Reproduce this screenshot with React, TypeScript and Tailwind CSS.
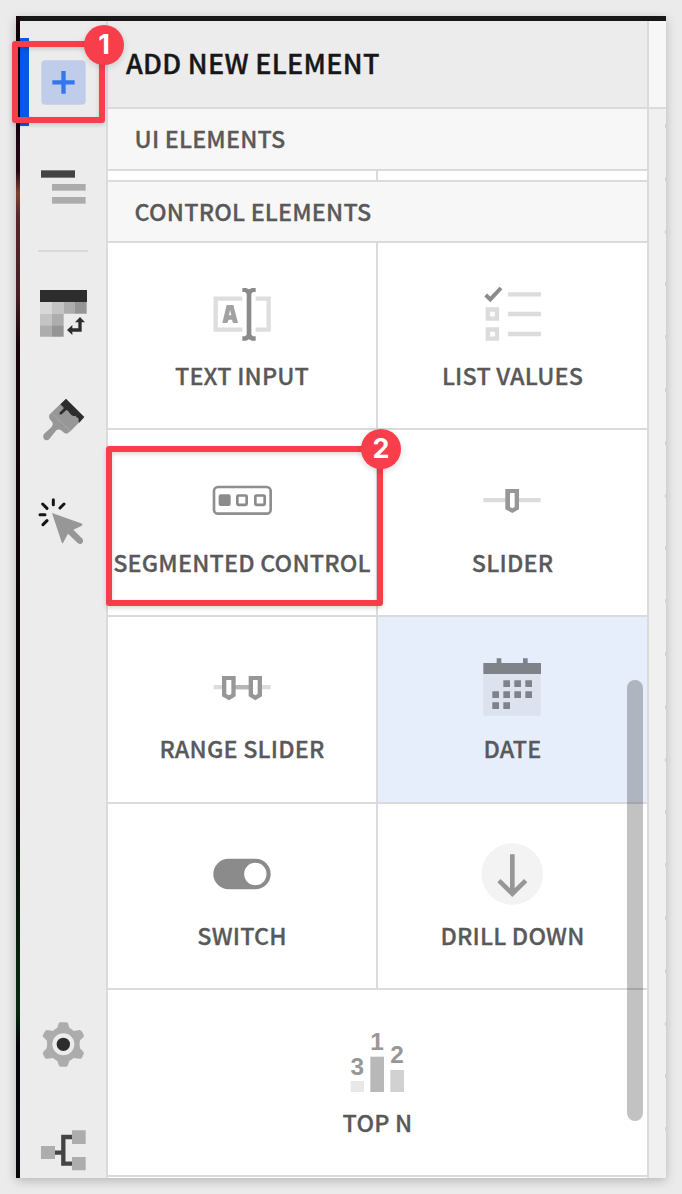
import type { ReactNode } from "react";

const FONT = "font-['Noto_Sans_CJK_SC','Noto_Sans',sans-serif]";

function NavIcon({ viewBox, className, label, children }: { viewBox: string; className: string; label: string; children: ReactNode }) {
  return (
    <button aria-label={label} className={`block w-[86px] shrink-0 ${className}`}>
      <svg viewBox={viewBox} className="block h-full w-full">{children}</svg>
    </button>
  );
}

function Tile({ label, viewBox, wide = false, className = "bg-white", labelGap = "mt-[11px]", children }: { label: string; viewBox: string; wide?: boolean; className?: string; labelGap?: string; children: ReactNode }) {
  return (
    <button className={`flex min-w-0 flex-col items-center overflow-hidden pt-[38px] ${className}`}>
      <svg viewBox={viewBox} className={wide ? "block h-[68px] w-[65px] shrink-0" : "block h-[68px] w-[64px] shrink-0"}>{children}</svg>
      <span className={`whitespace-nowrap text-[23.4px] font-medium leading-[30px] tracking-[0.18px] text-[#595959] [-webkit-text-stroke:0.3px_#595959] ${labelGap}`}>{label}</span>
    </button>
  );
}

function Sidebar() {
  return (
    <nav className="flex w-[86px] shrink-0 flex-col bg-[#ececec]">
      <button aria-label="Add" className="mt-[17px] block h-[88px] shrink-0 border-l-[9px] border-[#0558e8] pl-[12px]">
        <svg viewBox="123 180 135 135" className="block h-[45px] w-[45px]">
          <rect x="124" y="181" width="133" height="133" rx="12" fill="#bfcdea" />
          <path d="M157 247H224M190.500 213V281" stroke="#3477ea" strokeWidth="13" />
        </svg>
      </button>
      <NavIcon label="Outline" viewBox="60 105 258 135" className="mt-[39px] h-[45px]">
        <rect x="123" y="121" width="102" height="22" fill="#434343" />
        <rect x="156" y="162" width="101" height="20" fill="#acacac" />
        <rect x="156" y="201" width="101" height="20" fill="#acacac" />
      </NavIcon>
      <div className="ml-[18px] mt-[40px] h-[2px] w-[50px] shrink-0 bg-[#dadada]" />
      <NavIcon label="Data" viewBox="60 465 258 171" className="mt-[33px] h-[57px]">
        <rect x="120" y="480" width="141" height="36" fill="#2d2d2d" />
        <path d="M120 516h35v35h-35z" fill="#d8d8d8" />
        <path d="M155 516h36v35h-36zM120 551h35v35h-35z" fill="#c4c4c4" />
        <path d="M191 516h34v35h-34zM155 551h36v35h-36zM120 586h35v34h-35z" fill="#adadad" />
        <path d="M225 516h35v35h-35zM155 586h36v34h-36z" fill="#959595" />
        <path d="M240 570V600H212" fill="none" stroke="#2d2d2d" strokeWidth="10" />
        <path d="M225 577L240 561L255 577ZM217 585L201 600L217 615Z" fill="#2d2d2d" />
      </NavIcon>
      <NavIcon label="Style" viewBox="60 45 258 150" className="mt-[53px] h-[50px]">
        <path d="M181 72L148 104Q146 109 149 117L158 128Q160 136 154 142L131 163Q127 173 134 179Q142 183 148 177L169 151Q178 145 185 152Q193 161 201 161L211 154L239 126L216 88Z" fill="#979797" />
        <path d="M198 56L253 111L238 128Q234 124 235 116Q229 111 226 107Q217 110 212 103Q207 97 204 92L199 90L185 103Q179 105 178 99L192 84L181 73Z" fill="#2d2d2d" />
        <path d="M159 102L210 153" stroke="#bbb" strokeWidth="1.500" />
      </NavIcon>
      <NavIcon label="Actions" viewBox="60 330 258 180" className="mt-[45px] h-[60px]">
        <path d="M156 399L247 431Q248 435 244 438L220 449L248 477Q252 487 243 492Q238 493 233 489L204 461L189 489Q186 491 185 487Z" fill="#979797" />
        <path d="M160 359V374M192 372L180 384M128 372L141 385M120 404H135M141 422L129 434" stroke="#151515" strokeWidth="9" strokeLinecap="round" />
      </NavIcon>
      <div className="grow" />
      <NavIcon label="Settings" viewBox="60 45 258 171" className="h-[57px]">
        <path d="M180 67H200L204 70L208 83Q214 86 221 93L238 90Q244 91 247 96L252 107L250 112L240 121Q237 133 240 145L250 155L252 160L246 173Q243 177 238 176L221 174Q214 180 208 183L203 197L199 200H181L177 197L172 183Q166 180 159 174L142 176Q137 177 134 173L128 160L130 155L140 145Q143 133 140 121L130 112L128 107L134 95Q137 90 142 90L159 93Q166 86 172 83L176 70Z" fill="#acacac" />
        <circle cx="190" cy="133" r="33" fill="#ececec" />
        <circle cx="190" cy="133" r="20" fill="#2d2d2d" />
      </NavIcon>
      <NavIcon label="Lineage" viewBox="60 375 258 159" className="mt-[53px] h-[53px]">
        <path d="M164 458H190M217 411H190V491H217" fill="none" stroke="#444" strokeWidth="13" />
        <path d="M123 438h42v39h-42zM216 391h41v41h-41zM216 471h41v40h-41z" fill="#adadad" />
      </NavIcon>
    </nav>
  );
}

function Panel() {
  return (
    <section className="relative flex w-[543px] shrink-0 flex-col border-x-2 border-[#dbdbdb] bg-white">
      <h1 className="h-[88px] shrink-0 whitespace-nowrap border-b-2 border-[#dbdbdb] bg-[#ececec] pl-[18px] text-[27px] font-medium leading-[84px] tracking-[0.3px] text-[#171717] [-webkit-text-stroke:0.4px_#171717]">ADD NEW ELEMENT</h1>
      <h2 className="h-[62px] shrink-0 whitespace-nowrap border-b-2 border-[#dbdbdb] bg-[#f7f7f7] pl-[26.600px] text-[23.4px] font-medium leading-[58px] tracking-[0.17px] text-[#595959] [-webkit-text-stroke:0.3px_#595959]">UI ELEMENTS</h2>
      <div className="h-[9px] w-[270px] shrink-0 border-r-2 border-[#dbdbdb]" />
      <h2 className="h-[63px] shrink-0 whitespace-nowrap border-y-2 border-[#dbdbdb] bg-[#f7f7f7] pl-[26.600px] text-[23.4px] font-medium leading-[58px] tracking-[0.17px] text-[#595959] [-webkit-text-stroke:0.3px_#595959]">CONTROL ELEMENTS</h2>
      <div className="grid shrink-0 grid-cols-[268px_269px] grid-rows-[185px_185px_185px_184px_185px] gap-[2px] border-b-2 border-[#dbdbdb] bg-[#dbdbdb]">
        <Tile label="TEXT INPUT" viewBox="90 33 192 204">
          <path d="M187 86H107V179H187M227 86H266V179H227" fill="none" stroke="#dedede" strokeWidth="13" />
          <path d="M140 105H160L174 159H159L156 149H146L142 159H127ZM150 119L147 136H154Z" fill="#a2a2a2" fillRule="evenodd" />
          <path d="M187 54H198L207 58L216 54H227V66H219L214 71V194L219 199H227V212H216L207 208L198 212H187V199H195L200 194V71L195 66H187Z" fill="#8b8b8b" />
        </Tile>
        <Tile label="LIST VALUES" viewBox="900 33 195 204" wide>
          <path d="M917 75L931 88L963 54" fill="none" stroke="#8b8b8b" strokeWidth="12" />
          <path d="M984 73H1083M984 132H1083M984 192H1083" stroke="#dcdcdc" strokeWidth="13" />
          <path d="M923.500 118.500H951V146H923.500ZM923.500 178.500H951V206H923.500Z" fill="none" stroke="#dcdcdc" strokeWidth="13" />
        </Tile>
        <Tile label="SEGMENTED CONTROL" viewBox="330 114 192 204">
          <rect x="342" y="171" width="170" height="80" rx="12" fill="none" stroke="#8f8f8f" strokeWidth="8" />
          <rect x="356" y="193" width="36" height="35" rx="6" fill="#8b8b8b" />
          <rect x="412" y="196.500" width="28" height="28" rx="3" fill="none" stroke="#8b8b8b" strokeWidth="8" />
          <rect x="466" y="196.500" width="28" height="28" rx="3" fill="none" stroke="#8b8b8b" strokeWidth="8" />
        </Tile>
        <Tile label="SLIDER" viewBox="180 24 195 204" wide>
          <path d="M190 120.500H362" stroke="#dcdcdc" strokeWidth="13" />
          <path d="M256 87H297V148L277 159L256 148Z" fill="#979797" />
          <path d="M270 99H284V141L277 145L270 141Z" fill="white" />
        </Tile>
        <Tile label="RANGE SLIDER" viewBox="90 45 192 204" labelGap="mt-[10px]">
          <path d="M101 141.500H272" stroke="#dcdcdc" strokeWidth="13" />
          <path d="M166 141.500H208" stroke="#b5b5b5" strokeWidth="13" />
          <path d="M126 108H167V169L147 181L126 169ZM206 108H246V169L226 181L206 169Z" fill="#979797" />
          <path d="M139 120H154V162L147 166L139 162ZM219 120H233V162L226 166L219 162Z" fill="white" />
        </Tile>
        <Tile label="DATE" viewBox="180 585 195 204" wide className="bg-[#e7eefb]" labelGap="mt-[10px]">
          <rect x="190" y="642" width="172" height="125" fill="#dce2ee" />
          <path d="M190 609H230V595H244V609H309V595H323V609H363V642H190Z" fill="#7f8289" />
          <path d="M250 661h20v20h-20zM283 661h20v20h-20zM316 661h20v20h-20zM217 694h20v20h-20zM250 694h20v20h-20zM283 694h20v20h-20zM316 694h20v20h-20zM217 727h20v20h-20zM250 727h20v20h-20z" fill="#7f8289" />
        </Tile>
        <Tile label="SWITCH" viewBox="90 606 192 204" labelGap="mt-[10px]">
          <rect x="100" y="656" width="172" height="92" rx="46" fill="#8b8b8b" />
          <circle cx="226" cy="702" r="33.500" fill="white" />
        </Tile>
        <Tile label="DRILL DOWN" viewBox="180 126 195 204" wide labelGap="mt-[10px]">
          <circle cx="277" cy="222" r="92.500" fill="#f3f3f3" />
          <path d="M277 163V280M237 242L277 281L317 242" fill="none" stroke="#979797" strokeWidth="14" />
        </Tile>
        <div className="col-span-2 grid">
          <Tile label="TOP N" viewBox="135 54 195 204" wide>
            <path d="M152 213h40v33h-40z" fill="#e8e8e8" />
            <path d="M211 140h41v106h-41z" fill="#b8b8b8" />
            <path d="M271 180h41v66h-41z" fill="#d1d1d1" />
            <g fill="#979797" fontFamily="Liberation Sans" fontWeight="700" fontSize="73" textAnchor="middle">
              <text x="172" y="194">3</text>
              <text x="231" y="121">1</text>
              <text x="291" y="160">2</text>
            </g>
          </Tile>
        </div>
      </div>
      <div aria-hidden="true" className="absolute right-[4px] top-[659px] h-[441px] w-[16px] rounded-full bg-black/24" />
    </section>
  );
}

function CanvasEdge() {
  return (
    <aside className="flex w-[17px] shrink-0 flex-col bg-[#f0f0f0]">
      <div className="h-[88px] shrink-0 border-b-2 border-[#dbdbdb] bg-[#f7f7f7]" />
      <div className="flex flex-col items-end pt-[15px]">
        {Array.from({ length: 20 }, (_, i) => (
          <div key={i} className="h-[52.8px] w-px shrink-0">
            <div className="h-[4px] w-px bg-[#d2d2d2]" />
          </div>
        ))}
      </div>
    </aside>
  );
}

function Badge({ n, className }: { n: number; className: string }) {
  return (
    <div className={`absolute flex h-[40px] w-[40px] items-center justify-center rounded-full bg-[#f83e4a] pb-px font-['Inter',sans-serif] text-[27px] font-bold leading-none text-white shadow-[0_2px_6px_rgba(0,0,0,0.15)] ${className}`}>{n}</div>
  );
}

export default function App() {
  return (
    <main className={`relative h-[1194px] w-[682px] overflow-hidden bg-[#ebebeb] p-[16px] ${FONT}`}>
      <div className="flex h-[1162px] w-[650px] overflow-hidden shadow-[0_3px_10px_rgba(0,0,0,0.22)]">
        <div className="w-[4px] shrink-0 bg-[linear-gradient(#17050b_0px,#0b0207_20px,#000_60px,#000_100px,#1a0410_120px,#260716_155px,#7a432f_177px,#55282a_200px,#451d27_280px,#16050a_330px,#0d0508_500px,#080406_800px,#08240f_955px,#06280f_995px,#06050a_1030px,#09070c_1162px)]" />
        <div className="flex min-w-0 grow flex-col">
          <div className="h-[5px] shrink-0 bg-[#171717]" />
          <div className="flex min-h-0 grow">
            <Sidebar />
            <Panel />
            <CanvasEdge />
          </div>
        </div>
      </div>
      <div className="absolute left-[12px] top-[41px] h-[82px] w-[93px] rounded-[3px] border-[6px] border-[#f83e4a] drop-shadow-[0_2px_2px_rgba(0,0,0,0.15)]" />
      <Badge n={1} className="left-[84px] top-[25px]" />
      <div className="absolute left-[106px] top-[446px] h-[160px] w-[277px] rounded-[3px] border-[6px] border-[#f83e4a] drop-shadow-[0_2px_2px_rgba(0,0,0,0.15)]" />
      <Badge n={2} className="left-[361px] top-[429px]" />
    </main>
  );
}
